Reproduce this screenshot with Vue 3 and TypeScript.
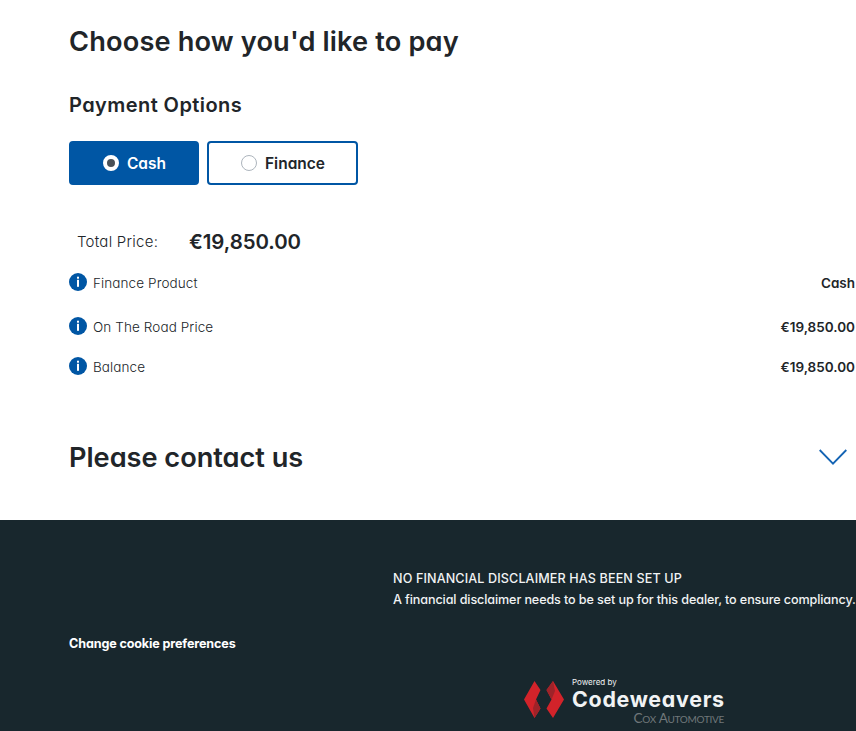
<script setup lang="ts">
import { ref } from 'vue'

interface Option { id: string; label: string }
interface QuoteRow { id: string; label: string; value: string }

const options: Option[] = [
  { id: 'cash', label: 'Cash' },
  { id: 'finance', label: 'Finance' },
]
const selected = ref<string>('cash')

const rows: QuoteRow[] = [
  { id: 'product', label: 'Finance Product', value: 'Cash' },
  { id: 'otr', label: 'On The Road Price', value: '€19,850.00' },
  { id: 'balance', label: 'Balance', value: '€19,850.00' },
]
</script>

<template>
  <div class="page">
    <main class="content">
      <h1 class="title">Choose how you'd like to pay</h1>
      <h2 class="subtitle">Payment Options</h2>
      <div class="options">
        <button
          v-for="o in options"
          :key="o.id"
          type="button"
          class="option"
          :class="[o.id, { active: selected === o.id }]"
          @click="selected = o.id"
        >
          <span class="radio"></span>
          <span>{{ o.label }}</span>
        </button>
      </div>
      <div class="total">
        <span class="total-label">Total Price:</span>
        <span class="total-value">€19,850.00</span>
      </div>
      <div class="rows">
        <div v-for="r in rows" :key="r.id" class="row" :class="r.id">
          <svg class="info" viewBox="0 0 18 18">
            <circle cx="9" cy="9" r="9" fill="#0056a4" />
            <rect x="8" y="3.7" width="2" height="2" fill="#fff" />
            <rect x="8" y="6.8" width="2" height="7" fill="#fff" />
          </svg>
          <span class="row-label">{{ r.label }}</span>
          <span class="row-value">{{ r.value }}</span>
        </div>
      </div>
      <div class="contact">
        <h1 class="title contact-title">Please contact us</h1>
        <svg class="chevron" viewBox="0 0 28 16">
          <path d="M0.7 1 L14 14.6 L27.3 1" fill="none" stroke="#1464b4" stroke-width="1.8" />
        </svg>
      </div>
    </main>
    <footer class="footer">
      <div class="disclaimer">
        <p class="caps">NO FINANCIAL DISCLAIMER HAS BEEN SET UP</p>
        <p class="sentence">A financial disclaimer needs to be set up for this dealer, to ensure compliancy.</p>
      </div>
      <a class="cookies">Change cookie preferences</a>
      <div class="brand">
        <svg class="mark" viewBox="0 0 40 37">
          <path d="M10.5 0 L16.5 9 L12 18.5 L16.5 27.5 L10.5 37 L0 18.5 Z" fill="#d2232a" />
          <path d="M12 18.5 L16.5 27.5 L10.5 37 L9 27 Z" fill="#9e2329" />
          <path d="M29 0 L40 18.5 L29 37 L22.5 27.5 L27.5 18.5 L22.5 9 Z" fill="#d2232a" />
          <path d="M29 0 L31 10 L27.5 18.5 L22.5 9 Z" fill="#9e2329" />
        </svg>
        <div class="brand-text">
          <span class="powered">Powered by</span>
          <span class="name">Codeweavers</span>
          <span class="parent">Cox Automotive</span>
        </div>
      </div>
    </footer>
  </div>
</template>

<style>
body {
  background: #fff;
}
</style>

<style scoped>
.page {
  width: 856px;
  height: 731px;
  overflow: hidden;
  display: flex;
  flex-direction: column;
  box-sizing: border-box;
  font-family: Inter, "Open Sans", sans-serif;
  font-feature-settings: "cv11";
  color: #212529;
  white-space: nowrap;
}
h1, h2, p {
  margin: 0;
}
.content {
  height: 520px;
  box-sizing: border-box;
  padding: 24px 1px 0 69px;
}
.title {
  font-size: 27.2px;
  line-height: 36px;
  font-weight: 600;
  letter-spacing: 0.15px;
}
.contact-title {
  letter-spacing: -0.03px;
}
.subtitle {
  margin-top: 32px;
  font-size: 20px;
  line-height: 26px;
  font-weight: 600;
  letter-spacing: 0.43px;
}
.options {
  display: flex;
  gap: 8px;
  margin-top: 23px;
}
.option {
  display: flex;
  align-items: center;
  justify-content: center;
  gap: 8px;
  width: 151px;
  height: 44px;
  padding: 0 0 0 1px;
  border: 2px solid #0056a4;
  border-radius: 4px;
  background: #fff;
  color: #212529;
  font-family: inherit;
  font-feature-settings: inherit;
  font-size: 15.5px;
  font-weight: 600;
}
.option.cash {
  width: 130px;
}
.option.active {
  background: #0056a4;
  color: #fff;
}
.radio {
  width: 16px;
  height: 16px;
  box-sizing: border-box;
  border: 1px solid #adb5bd;
  border-radius: 50%;
  background: #fff;
}
.active .radio {
  border: 4px solid #fff;
  background: #495057;
}
.total {
  display: flex;
  height: 28px;
  margin-top: 42px;
  padding-left: 8px;
}
.total-label {
  width: 112px;
  font-size: 15px;
  line-height: 29px;
  font-weight: 300;
  letter-spacing: 0.25px;
}
.total-value {
  font-size: 20.4px;
  line-height: 30px;
  font-weight: 600;
  letter-spacing: -0.05px;
}
.rows {
  margin-top: 18px;
}
.row {
  display: flex;
  align-items: flex-start;
  height: 44px;
  font-size: 13.5px;
  line-height: 20px;
}
.row.otr {
  height: 40px;
}
.info {
  width: 18px;
  height: 18px;
  margin-right: 6px;
}
.row-label {
  font-weight: 300;
  letter-spacing: 0.1px;
}
.row-value {
  margin-left: auto;
  font-weight: 600;
}
.contact {
  display: flex;
  justify-content: space-between;
  align-items: center;
  margin-top: 39px;
  padding-right: 8px;
}
.chevron {
  width: 28px;
  height: 16px;
  margin-top: -3px;
}
.footer {
  flex: 1;
  background: #18272d;
  color: #f1f3f4;
  padding: 48px 0 0 69px;
  font-size: 12.6px;
  line-height: 21px;
}
.disclaimer {
  padding-left: 324px;
  font-weight: 450;
}
.caps {
  letter-spacing: 0.12px;
}
.sentence {
  letter-spacing: -0.11px;
}
.cookies {
  display: block;
  margin-top: 23px;
  color: #fff;
  font-weight: 700;
  letter-spacing: -0.14px;
}
.brand {
  display: flex;
  gap: 8px;
  margin-top: 23px;
  padding-left: 455px;
}
.mark {
  width: 40px;
  height: 37px;
  margin-top: 4px;
}
.brand-text {
  display: flex;
  flex-direction: column;
  width: 152px;
}
.powered {
  font-size: 8px;
  line-height: 10px;
}
.name {
  margin-top: 1px;
  font-size: 21.4px;
  line-height: 23px;
  font-weight: 650;
  letter-spacing: 0.72px;
}
.parent {
  align-self: flex-end;
  margin-top: 1px;
  font-family: Lato, sans-serif;
  font-size: 13.6px;
  line-height: 12px;
  font-weight: 400;
  font-variant: small-caps;
  letter-spacing: -0.3px;
  color: #70777a;
}
</style>
